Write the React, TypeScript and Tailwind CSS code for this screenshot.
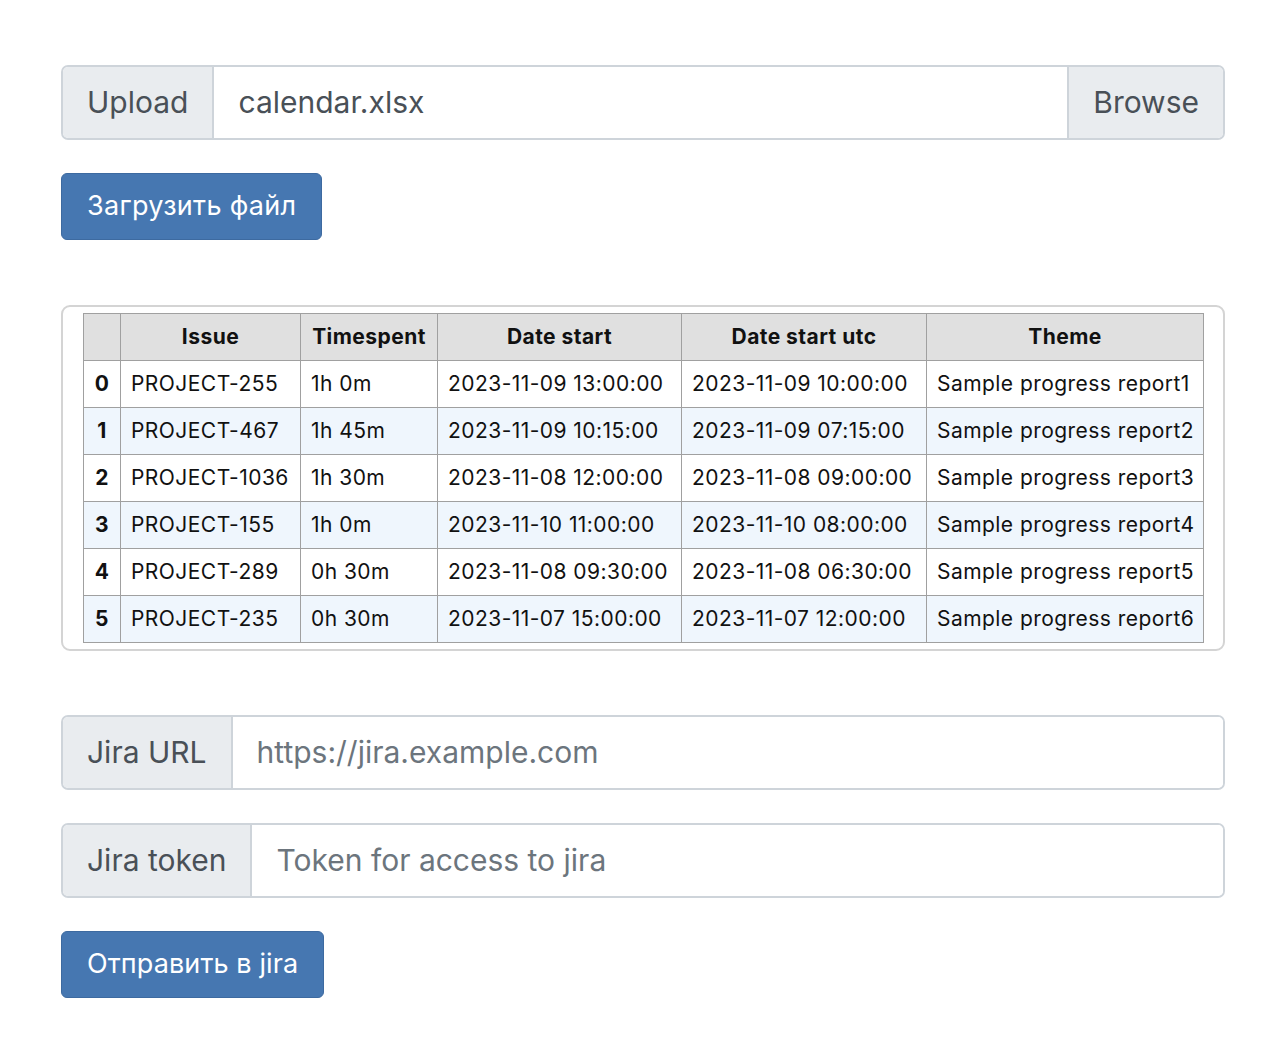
const rows = [
  ["PROJECT-255", "1h 0m", "2023-11-09 13:00:00", "2023-11-09 10:00:00", "Sample progress report1"],
  ["PROJECT-467", "1h 45m", "2023-11-09 10:15:00", "2023-11-09 07:15:00", "Sample progress report2"],
  ["PROJECT-1036", "1h 30m", "2023-11-08 12:00:00", "2023-11-08 09:00:00", "Sample progress report3"],
  ["PROJECT-155", "1h 0m", "2023-11-10 11:00:00", "2023-11-10 08:00:00", "Sample progress report4"],
  ["PROJECT-289", "0h 30m", "2023-11-08 09:30:00", "2023-11-08 06:30:00", "Sample progress report5"],
  ["PROJECT-235", "0h 30m", "2023-11-07 15:00:00", "2023-11-07 12:00:00", "Sample progress report6"],
];

const headers = ["Issue", "Timespent", "Date start", "Date start utc", "Theme"];

function Addon({ children, side }: { children: React.ReactNode; side: "left" | "right" }) {
  return (
    <span
      className={
        "flex items-center px-6 bg-[#e9ecef] text-[#495057] " +
        (side === "left" ? "border-r-2 border-[#ced4da]" : "border-l-2 border-[#ced4da]")
      }
    >
      {children}
    </span>
  );
}

export default function App() {
  return (
    <div
      className="bg-white min-h-[1064px] px-[61px] pt-[65px] text-[#212529]"
      style={{ fontFamily: "Inter, 'Liberation Sans', sans-serif" }}
    >
      <div className="w-[1164px]">
        <div className="flex h-[75px] border-2 border-[#ced4da] rounded-[7px] overflow-hidden text-[30px]">
          <Addon side="left">Upload</Addon>
          <div className="flex-1 flex items-center px-6 text-[#495057]">calendar.xlsx</div>
          <Addon side="right">Browse</Addon>
        </div>

        <button className="mt-[33px] h-[67px] px-[25px] rounded-[6px] bg-[#4677b1] border border-[#3d6aa0] text-white text-[27px] tracking-[0.3px]">
          Загрузить файл
        </button>

        <div className="mt-[65px] border-2 border-[#d4d4d4] rounded-[9px] pt-[6px] pb-[6px] px-[20px]">
          <table className="w-[1120px] table-fixed border-collapse text-[21px] tracking-[0.45px] text-[#111]">
            <colgroup>
              <col className="w-[37px]" />
              <col className="w-[180px]" />
              <col className="w-[137px]" />
              <col className="w-[244px]" />
              <col className="w-[245px]" />
              <col className="w-[277px]" />
            </colgroup>
            <thead>
              <tr className="bg-[#e0e0e0] h-[47px]">
                <th className="border border-[#a0a0a0]"></th>
                {headers.map((h) => (
                  <th key={h} className="border border-[#a0a0a0] font-bold text-center px-[8px]">
                    {h}
                  </th>
                ))}
              </tr>
            </thead>
            <tbody>
              {rows.map((r, i) => (
                <tr key={i} className={(i % 2 === 1 ? "bg-[#eff6fd]" : "bg-white") + " h-[47px]"}>
                  <td className="border border-[#a0a0a0] font-bold text-center">{i}</td>
                  {r.map((c, j) => (
                    <td key={j} className="border border-[#a0a0a0] px-[10px] whitespace-nowrap overflow-hidden">
                      {c}
                    </td>
                  ))}
                </tr>
              ))}
            </tbody>
          </table>
        </div>

        <div className="mt-[64px] flex h-[75px] border-2 border-[#ced4da] rounded-[7px] overflow-hidden text-[30px]">
          <Addon side="left">Jira URL</Addon>
          <input
            className="flex-1 px-6 outline-none placeholder:text-[#6c757d] bg-white"
            placeholder="https://jira.example.com"
          />
        </div>

        <div className="mt-[33px] flex h-[75px] border-2 border-[#ced4da] rounded-[7px] overflow-hidden text-[30px]">
          <Addon side="left">Jira token</Addon>
          <input
            className="flex-1 px-6 outline-none placeholder:text-[#6c757d] bg-white"
            placeholder="Token for access to jira"
          />
        </div>

        <button className="mt-[33px] h-[67px] px-[25px] rounded-[6px] bg-[#4677b1] border border-[#3d6aa0] text-white text-[27px] tracking-[0.1px]">
          Отправить в jira
        </button>
      </div>
    </div>
  );
}
